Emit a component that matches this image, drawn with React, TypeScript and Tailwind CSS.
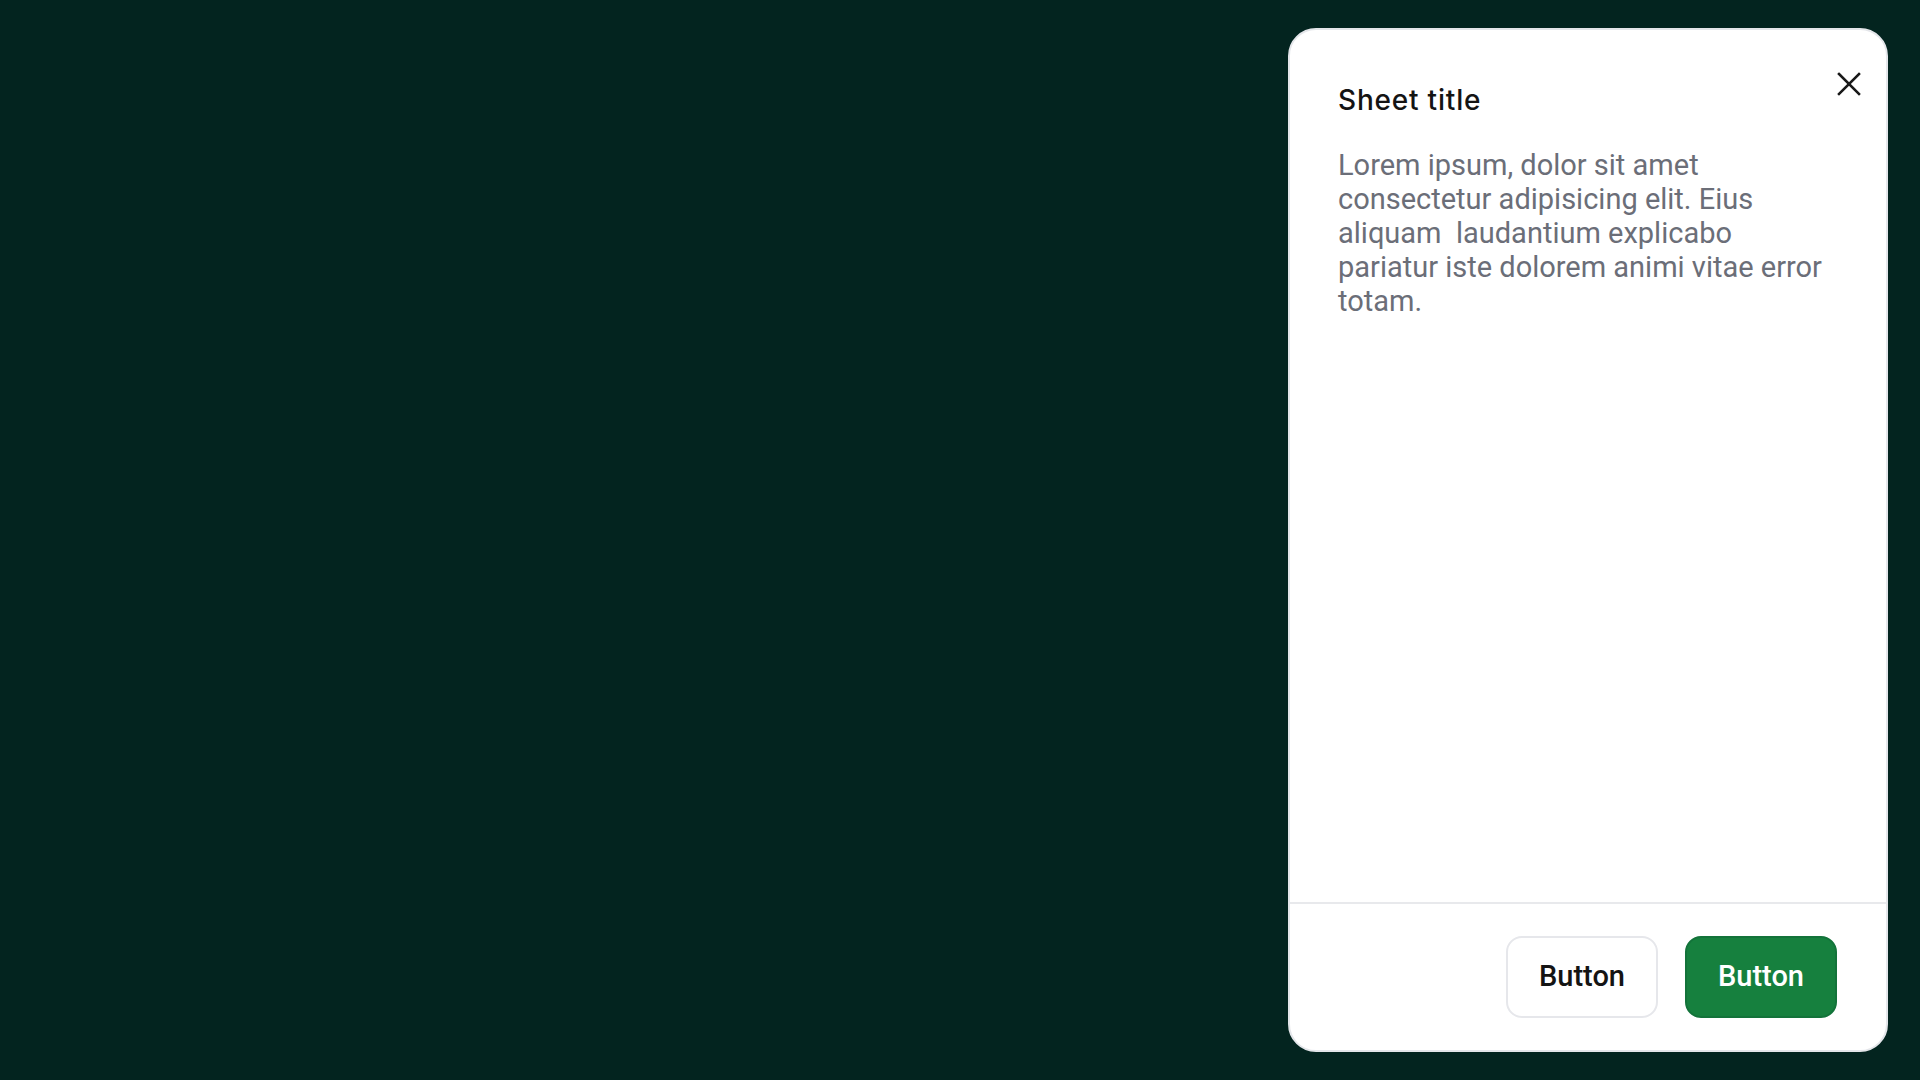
import React from 'react';

// Side sheet over a dark teal backdrop: title, close, body copy, footer actions.

function CloseIcon() {
  return (
    <svg width="24" height="24" viewBox="0 0 24 24" fill="none" stroke="#1a1a1a" strokeWidth="2.6" strokeLinecap="square">
      <path d="M2 2 22 22" />
      <path d="M22 2 2 22" />
    </svg>
  );
}

export default function App() {
  return (
    <div
      className="w-full h-screen bg-[#03241f] flex justify-end py-[28px] pr-8"
      style={{ fontFamily: 'Roboto, "Liberation Sans", sans-serif' }}
    >
      <div className="relative w-[600px] h-full bg-white border-2 border-[#e4e6ea] rounded-[28px] flex flex-col overflow-hidden">
        {/* Close */}
        <button className="absolute right-[17px] top-[34px] w-10 h-10 flex items-center justify-center">
          <CloseIcon />
        </button>

        {/* Header + body */}
        <div className="flex-1 flex flex-col pt-[52px] pl-12 pr-12">
          <h2
            className="text-[28px] leading-[36px] font-medium tracking-[0.8px] text-[#141414]"
            style={{ fontFamily: 'Inter, "Noto Sans", sans-serif' }}
          >
            Sheet title
          </h2>
          <p className="mt-[30px] text-[29px] leading-[34px] text-[#6b6e78] whitespace-pre">
            Lorem ipsum, dolor sit amet
            <br />
            consectetur adipisicing elit. Eius
            <br />
            {'aliquam  laudantium explicabo'}
            <br />
            pariatur iste dolorem animi vitae error
            <br />
            totam.
          </p>
        </div>

        {/* Footer */}
        <div className="h-[148px] border-t-2 border-[#e8e9ec] flex items-center justify-end gap-[27px] pr-[49px]">
          <button className="w-[152px] h-[82px] rounded-[16px] border-2 border-[#e6e7eb] bg-white text-[29px] font-medium text-[#141414]">
            Button
          </button>
          <button className="w-[152px] h-[82px] rounded-[16px] border-2 border-[#13733a] bg-[#16803e] text-[29px] font-medium text-white">
            Button
          </button>
        </div>
      </div>
    </div>
  );
}
